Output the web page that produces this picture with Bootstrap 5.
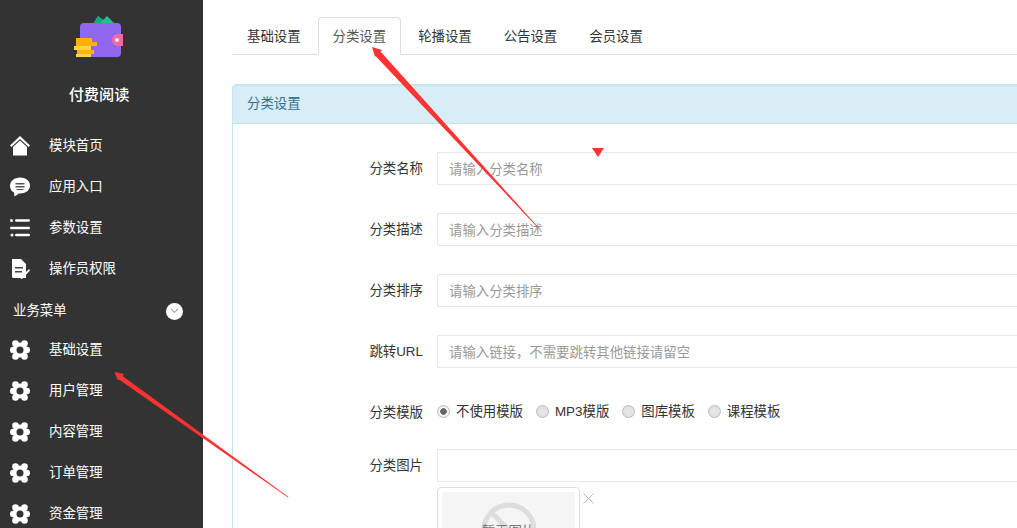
<!DOCTYPE html>
<html lang="zh">
<head>
<meta charset="utf-8">
<title>付费阅读</title>
<link href="https://cdn.jsdelivr.net/npm/bootstrap@5.3.0/dist/css/bootstrap.min.css" rel="stylesheet">
<style>
html,body{height:528px;overflow:hidden}
body{font:13.4px/1.43 "Liberation Sans","Noto Sans CJK SC",sans-serif;color:#333;position:relative}
.shell{width:1017px;height:528px;overflow:hidden}
.side{width:203px;flex:none;background:#333;color:#fff}
.brand{padding-top:15px;height:125px}
.brand svg{display:block;margin-left:74px}
.brand-name{font-size:15.200px;text-align:center;margin-top:26px;padding-right:5px;line-height:20px;font-weight:500}
.menu-row{height:41px;padding-left:10px;color:#fff;text-decoration:none;font-size:13.4px}
.menu-row svg{width:20px;height:20px;margin-right:19px;flex:none}
.menu-head{height:41px;padding:3px 20px 0 13px;font-size:13.4px;margin-bottom:-1px}
.dot{width:17px;height:17px;border-radius:50%;background:#fff}
.work{flex:none;width:900px;padding:17px 0 0 29px}
.tabs-x{height:38px;border-bottom:1px solid #ddd;--bs-nav-tabs-border-color:#ddd}
.tabs-x .nav-link{font-size:13.4px;color:#333;padding:9px 14px 7px;height:38px;margin-right:2px;line-height:20px;border-radius:4px 4px 0 0}
.tabs-x .nav-link.active{color:#555;border-color:#ddd #ddd #fff}
.sheet{margin-top:29px;border:1px solid #bce8f1;border-radius:4px 4px 0 0;width:860px}
.sheet-head{height:39px;line-height:38px;padding:0 14px;background:#d9edf7;color:#31708f;border-bottom:1px solid #bce8f1;box-shadow:inset 0 1px 0 #cfe4ee}
.sheet-body{padding:28px 0 0 0}
.line{margin-bottom:28px;height:33px}
.line-label{width:190px;flex:none;text-align:right;margin-right:14px;line-height:33px;color:#333}
.line-field{flex:1;height:33px;border:1px solid #e5e6e7;border-radius:1px;padding:1px 11px 0;font-size:13.4px;color:#555;background:#fff}
.line-field::placeholder{color:#999;opacity:1}
.line-field:focus{outline:0}
.radios{gap:13px;line-height:31px;height:31px}
.radio-x{appearance:none;width:13px;height:13px;border-radius:50%;border:1px solid #bbb;background:radial-gradient(circle,#e8e8e8 0,#dcdcdc 100%);margin:0 6px 0 0;flex:none}
.radio-x:checked{background:radial-gradient(circle,#666 0 3px,#f2f2f2 3.5px)}
.line-radio{margin-bottom:20px}
.line-tall{height:auto;margin-bottom:0}
.pic-wrap{margin-left:204px;margin-top:5px;position:relative;width:143px;height:140px;border:1px solid #ddd;border-radius:4px;padding:4px}
.pic-box{height:130px;background:#f5f5f5;position:relative;overflow:hidden}
.pic-box svg{position:absolute;left:39px;top:10px}
.pic-text{position:absolute;left:0;right:0;top:31px;text-align:center;color:#777;line-height:18px}
.pic-close{position:absolute;left:145px;top:5px}
.marks{position:absolute;left:0;top:0;pointer-events:none}
</style>
</head>
<body>
<div class="shell d-flex">
  <aside class="side">
    <div class="brand">
      <svg width="50" height="44" viewBox="0 0 50 44">
        <path d="M19 9 24 1 29 5 33 1 41 9Z" fill="#1fc08e"/>
        <path d="M19 9 24 1 29 5 25 9Z" fill="#17a57a"/>
        <rect x="6" y="8" width="41" height="34" rx="4" fill="#9068ef"/>
        <path d="M6 23V38a4 4 0 0 0 4 4H16V23Z" fill="#ffc93c"/>
        <path d="M44 19h5v12H44a6 6 0 0 1 0-12Z" fill="#ee6aa3"/>
        <circle cx="43" cy="25" r="2" fill="#ffe3ef"/>
        <rect x="2" y="23" width="16" height="4" fill="#ffb300"/>
        <rect x="2" y="27" width="21" height="4" fill="#ffb300"/>
        <rect x="0" y="31" width="17" height="4" fill="#ffd24d"/>
        <rect x="3" y="35" width="17" height="4" fill="#ffb300"/>
        <rect x="2" y="39" width="15" height="3" fill="#ffd24d"/>
      </svg>
      <div class="brand-name">付费阅读</div>
    </div>
    <a class="menu-row d-flex align-items-center" href="#"><svg viewBox="0 0 20 20"><path d="M10 0 20 9.500 18.600 11 10 3 1.400 11 0 9.500Z" fill="#fff"/><path d="M3 11 10 4.600 17 11V19.500H3Z" fill="#fff"/></svg>模块首页</a>
    <a class="menu-row d-flex align-items-center" href="#"><svg viewBox="0 0 20 20"><path d="M10 .5C4.500.5 0 4 0 9c0 3 1.700 5.300 4 6.500L4.500 19.500 9 16.500h1C15.500 16.500 20 13.500 20 8.500S15.500.5 10 .5Z" fill="#fff"/><path d="M5.500 6h9v1.500h-9zM5.500 9h9v1.500h-9zM6.500 12h7v1h-7z" fill="#555"/></svg>应用入口</a>
    <a class="menu-row d-flex align-items-center" href="#"><svg viewBox="0 0 20 20" fill="#fff"><circle cx="1.500" cy="2.500" r="1.500"/><rect x="5" y="1.200" width="15" height="2.600" rx="1.300"/><rect x="0" y="8.700" width="20" height="2.600" rx="1.300"/><circle cx="2" cy="17" r="1.500"/><rect x="5" y="15.700" width="15" height="2.600" rx="1.300"/></svg>参数设置</a>
    <a class="menu-row d-flex align-items-center" href="#"><svg viewBox="0 0 20 20"><path d="M2 0H11L16 5V19H3.500A1.500 1.500 0 0 1 2 17.500Z" fill="#fff"/><path d="M5 8h8v1.400H5zM5 12h7v1.400H5z" fill="#444"/><path d="M10 19 19 10 20 11.500 12 20Z" fill="#fff"/></svg>操作员权限</a>
    <div class="menu-head d-flex align-items-center justify-content-between">业务菜单<span class="dot d-flex align-items-center justify-content-center"><svg width="9" height="6" viewBox="0 0 9 6"><path d="M1 1 4.500 4.500 8 1" fill="none" stroke="#aaa" stroke-width="1.200"/></svg></span></div>
    <svg width="0" height="0" class="position-absolute"><defs><g id="gear"><g fill="#fff"><circle cx="10" cy="10" r="7.500"/><circle cx="5.500" cy="3.500" r="3.300"/><circle cx="14.500" cy="3.500" r="3.300"/><circle cx="5.500" cy="16.500" r="3.300"/><circle cx="14.500" cy="16.500" r="3.300"/><circle cx="3.200" cy="10" r="3.200"/><circle cx="16.800" cy="10" r="3.200"/></g><circle cx="10" cy="10" r="3.500" fill="#333"/></g></defs></svg>
    <a class="menu-row d-flex align-items-center" href="#"><svg viewBox="0 0 20 20"><use href="#gear"/></svg>基础设置</a>
    <a class="menu-row d-flex align-items-center" href="#"><svg viewBox="0 0 20 20"><use href="#gear"/></svg>用户管理</a>
    <a class="menu-row d-flex align-items-center" href="#"><svg viewBox="0 0 20 20"><use href="#gear"/></svg>内容管理</a>
    <a class="menu-row d-flex align-items-center" href="#"><svg viewBox="0 0 20 20"><use href="#gear"/></svg>订单管理</a>
    <a class="menu-row d-flex align-items-center" href="#"><svg viewBox="0 0 20 20"><use href="#gear"/></svg>资金管理</a>
  </aside>
  <main class="work">
    <ul class="nav nav-tabs tabs-x">
      <li class="nav-item"><a class="nav-link" href="#">基础设置</a></li>
      <li class="nav-item"><a class="nav-link active" href="#">分类设置</a></li>
      <li class="nav-item"><a class="nav-link" href="#">轮播设置</a></li>
      <li class="nav-item"><a class="nav-link" href="#">公告设置</a></li>
      <li class="nav-item"><a class="nav-link" href="#">会员设置</a></li>
    </ul>
    <section class="sheet">
      <div class="sheet-head">分类设置</div>
      <form class="sheet-body">
        <div class="line d-flex"><label class="line-label">分类名称</label><input class="line-field" placeholder="请输入分类名称"></div>
        <div class="line d-flex"><label class="line-label">分类描述</label><input class="line-field" placeholder="请输入分类描述"></div>
        <div class="line d-flex"><label class="line-label">分类排序</label><input class="line-field" placeholder="请输入分类排序"></div>
        <div class="line d-flex"><label class="line-label">跳转URL</label><input class="line-field" placeholder="请输入链接，不需要跳转其他链接请留空"></div>
        <div class="line line-radio d-flex"><label class="line-label">分类模版</label>
          <div class="radios d-flex">
            <label class="d-flex align-items-center"><input class="radio-x" type="radio" name="m" checked>不使用模版</label>
            <label class="d-flex align-items-center"><input class="radio-x" type="radio" name="m">MP3模版</label>
            <label class="d-flex align-items-center"><input class="radio-x" type="radio" name="m">图库模板</label>
            <label class="d-flex align-items-center"><input class="radio-x" type="radio" name="m">课程模板</label>
          </div>
        </div>
        <div class="line line-tall">
          <div class="d-flex"><label class="line-label">分类图片</label><input class="line-field"></div>
          <div class="pic-wrap">
            <div class="pic-box">
              <svg width="56" height="56" viewBox="0 0 56 56"><circle cx="28" cy="28" r="25" fill="none" stroke="#ddd" stroke-width="5"/><path d="M11 11 45 45" stroke="#ddd" stroke-width="5"/></svg>
              <div class="pic-text">暂无图片</div>
            </div>
            <svg class="pic-close" width="11" height="11" viewBox="0 0 11 11"><path d="M.5.5 10.500 10.500M10.500.5.500 10.500" stroke="#bbb" stroke-width="1"/></svg>
          </div>
        </div>
      </form>
    </section>
  </main>
</div>
<svg class="marks" width="1017" height="528" viewBox="0 0 1017 528">
  <path d="M372 47 382 50 380.500 51.500 538.500 227.500 538 228 375.500 56 375 57Z" fill="#f33"/>
  <path d="M114.500 372 124 374 122.500 376 288.500 497 288 497.500 119 379.500 118 380.500Z" fill="#f33"/>
  <path d="M592 148H604L598 157Z" fill="#f33"/>
</svg>
</body>
</html>
